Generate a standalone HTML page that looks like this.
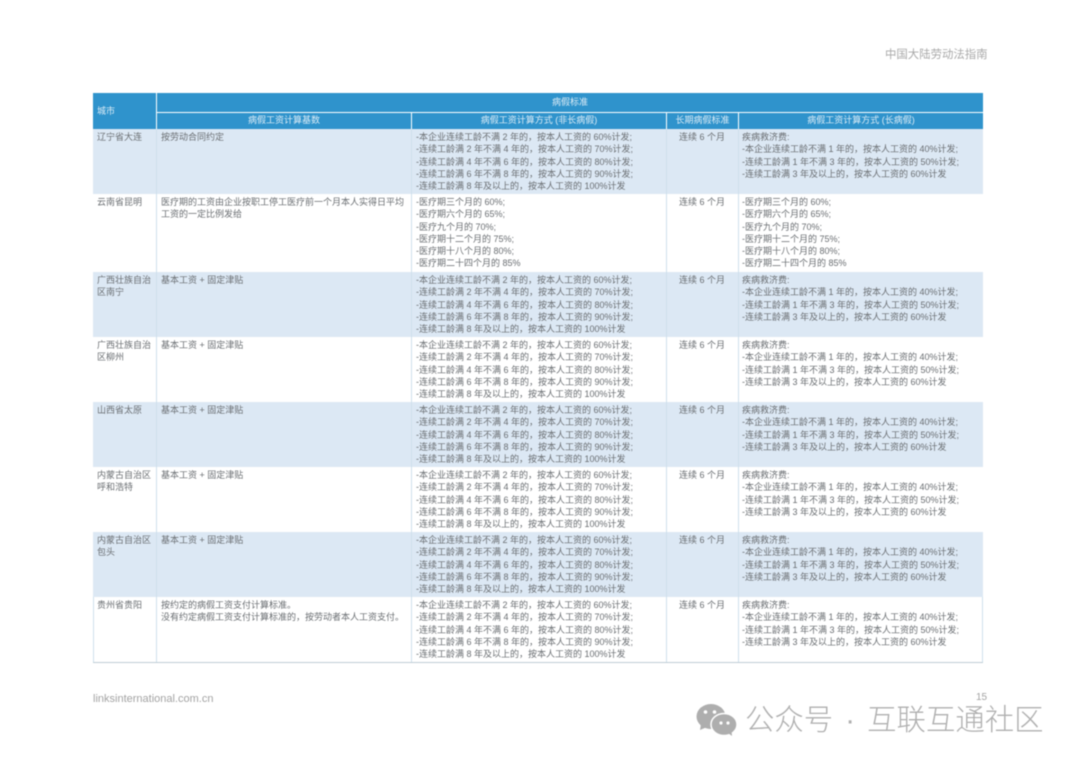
<!DOCTYPE html>
<html lang="zh-CN"><head><meta charset="utf-8"><title>中国大陆劳动法指南</title>
<style>
html,body{margin:0;padding:0;background:#fff}
body{width:1080px;height:764px;position:relative;overflow:hidden;font-family:"Liberation Sans","Noto Sans CJK SC",sans-serif}
.a{position:absolute}
.soft{position:absolute;left:0;top:0;width:1080px;height:764px;filter:blur(.4px)}
.h{position:absolute;background:#2f93cc;color:#dcecf6;font-size:9px;line-height:12px;text-align:center}
.r{position:absolute;left:93px;width:890px}
.r.b{background:#dce8f4}
.r.w{background:#fff}
.c{position:absolute;top:0;bottom:0;font-size:9px;line-height:12.25px;color:#6a6e72;white-space:nowrap;padding-top:2px}
.c1{left:0;width:63px;padding-left:4px;box-sizing:border-box;white-space:normal;word-break:break-all}
.c2{left:63px;width:255px;padding-left:5px;box-sizing:border-box;white-space:normal}
.c3{left:318px;width:255px;padding-left:5px;box-sizing:border-box}
.c4{left:573px;width:72px;text-align:center}
.c5{left:645px;width:245px;padding-left:4px;box-sizing:border-box}
.v{position:absolute;width:1px;background:#cfe0ec}
</style></head><body>
<div class="soft">
<div class="a" style="left:885px;top:48px;font-size:11.4px;line-height:15px;color:#a9a9a9;white-space:nowrap">中国大陆劳动法指南</div>

<div class="h" style="left:93px;top:93px;width:63px;height:36px;text-align:left"><span class="a" style="left:4px;top:12px">城市</span></div>
<div class="h" style="left:157px;top:93px;width:826px;height:19px;line-height:18px">病假标准</div>
<div class="h" style="left:157px;top:113px;width:254px;height:16px;line-height:15px">病假工资计算基数</div>
<div class="h" style="left:412px;top:113px;width:254px;height:16px;line-height:15px">病假工资计算方式 (非长病假)</div>
<div class="h" style="left:667px;top:113px;width:71px;height:16px;line-height:15px">长期病假标准</div>
<div class="h" style="left:739px;top:113px;width:244px;height:16px;line-height:15px">病假工资计算方式 (长病假)</div>

<div class="r b" style="top:129px;height:65px"><div class="c c1">辽宁省大连</div><div class="c c2">按劳动合同约定</div><div class="c c3">-本企业连续工龄不满 2 年的，按本人工资的 60%计发;<br>-连续工龄满 2 年不满 4 年的，按本人工资的 70%计发;<br>-连续工龄满 4 年不满 6 年的，按本人工资的 80%计发;<br>-连续工龄满 6 年不满 8 年的，按本人工资的 90%计发;<br>-连续工龄满 8 年及以上的，按本人工资的 100%计发</div><div class="c c4">连续 6 个月</div><div class="c c5">疾病救济费:<br>-本企业连续工龄不满 1 年的，按本人工资的 40%计发;<br>-连续工龄满 1 年不满 3 年的，按本人工资的 50%计发;<br>-连续工龄满 3 年及以上的，按本人工资的 60%计发</div></div>

<div class="r w" style="top:194px;height:78px"><div class="c c1">云南省昆明</div><div class="c c2">医疗期的工资由企业按职工停工医疗前一个月本人实得日平均工资的一定比例发给</div><div class="c c3">-医疗期三个月的 60%;<br>-医疗期六个月的 65%;<br>-医疗九个月的 70%;<br>-医疗期十二个月的 75%;<br>-医疗期十八个月的 80%;<br>-医疗期二十四个月的 85%</div><div class="c c4">连续 6 个月</div><div class="c c5">-医疗期三个月的 60%;<br>-医疗期六个月的 65%;<br>-医疗九个月的 70%;<br>-医疗期十二个月的 75%;<br>-医疗期十八个月的 80%;<br>-医疗期二十四个月的 85%</div></div>

<div class="r b" style="top:272px;height:65px"><div class="c c1">广西壮族自治区南宁</div><div class="c c2">基本工资 + 固定津贴</div><div class="c c3">-本企业连续工龄不满 2 年的，按本人工资的 60%计发;<br>-连续工龄满 2 年不满 4 年的，按本人工资的 70%计发;<br>-连续工龄满 4 年不满 6 年的，按本人工资的 80%计发;<br>-连续工龄满 6 年不满 8 年的，按本人工资的 90%计发;<br>-连续工龄满 8 年及以上的，按本人工资的 100%计发</div><div class="c c4">连续 6 个月</div><div class="c c5">疾病救济费:<br>-本企业连续工龄不满 1 年的，按本人工资的 40%计发;<br>-连续工龄满 1 年不满 3 年的，按本人工资的 50%计发;<br>-连续工龄满 3 年及以上的，按本人工资的 60%计发</div></div>

<div class="r w" style="top:337px;height:65px"><div class="c c1">广西壮族自治区柳州</div><div class="c c2">基本工资 + 固定津贴</div><div class="c c3">-本企业连续工龄不满 2 年的，按本人工资的 60%计发;<br>-连续工龄满 2 年不满 4 年的，按本人工资的 70%计发;<br>-连续工龄满 4 年不满 6 年的，按本人工资的 80%计发;<br>-连续工龄满 6 年不满 8 年的，按本人工资的 90%计发;<br>-连续工龄满 8 年及以上的，按本人工资的 100%计发</div><div class="c c4">连续 6 个月</div><div class="c c5">疾病救济费:<br>-本企业连续工龄不满 1 年的，按本人工资的 40%计发;<br>-连续工龄满 1 年不满 3 年的，按本人工资的 50%计发;<br>-连续工龄满 3 年及以上的，按本人工资的 60%计发</div></div>

<div class="r b" style="top:402px;height:65px"><div class="c c1">山西省太原</div><div class="c c2">基本工资 + 固定津贴</div><div class="c c3">-本企业连续工龄不满 2 年的，按本人工资的 60%计发;<br>-连续工龄满 2 年不满 4 年的，按本人工资的 70%计发;<br>-连续工龄满 4 年不满 6 年的，按本人工资的 80%计发;<br>-连续工龄满 6 年不满 8 年的，按本人工资的 90%计发;<br>-连续工龄满 8 年及以上的，按本人工资的 100%计发</div><div class="c c4">连续 6 个月</div><div class="c c5">疾病救济费:<br>-本企业连续工龄不满 1 年的，按本人工资的 40%计发;<br>-连续工龄满 1 年不满 3 年的，按本人工资的 50%计发;<br>-连续工龄满 3 年及以上的，按本人工资的 60%计发</div></div>

<div class="r w" style="top:467px;height:65px"><div class="c c1">内蒙古自治区呼和浩特</div><div class="c c2">基本工资 + 固定津贴</div><div class="c c3">-本企业连续工龄不满 2 年的，按本人工资的 60%计发;<br>-连续工龄满 2 年不满 4 年的，按本人工资的 70%计发;<br>-连续工龄满 4 年不满 6 年的，按本人工资的 80%计发;<br>-连续工龄满 6 年不满 8 年的，按本人工资的 90%计发;<br>-连续工龄满 8 年及以上的，按本人工资的 100%计发</div><div class="c c4">连续 6 个月</div><div class="c c5">疾病救济费:<br>-本企业连续工龄不满 1 年的，按本人工资的 40%计发;<br>-连续工龄满 1 年不满 3 年的，按本人工资的 50%计发;<br>-连续工龄满 3 年及以上的，按本人工资的 60%计发</div></div>

<div class="r b" style="top:532px;height:65px"><div class="c c1">内蒙古自治区包头</div><div class="c c2">基本工资 + 固定津贴</div><div class="c c3">-本企业连续工龄不满 2 年的，按本人工资的 60%计发;<br>-连续工龄满 2 年不满 4 年的，按本人工资的 70%计发;<br>-连续工龄满 4 年不满 6 年的，按本人工资的 80%计发;<br>-连续工龄满 6 年不满 8 年的，按本人工资的 90%计发;<br>-连续工龄满 8 年及以上的，按本人工资的 100%计发</div><div class="c c4">连续 6 个月</div><div class="c c5">疾病救济费:<br>-本企业连续工龄不满 1 年的，按本人工资的 40%计发;<br>-连续工龄满 1 年不满 3 年的，按本人工资的 50%计发;<br>-连续工龄满 3 年及以上的，按本人工资的 60%计发</div></div>

<div class="r w" style="top:597px;height:65px"><div class="c c1">贵州省贵阳</div><div class="c c2">按约定的病假工资支付计算标准。<br>没有约定病假工资支付计算标准的，按劳动者本人工资支付。</div><div class="c c3">-本企业连续工龄不满 2 年的，按本人工资的 60%计发;<br>-连续工龄满 2 年不满 4 年的，按本人工资的 70%计发;<br>-连续工龄满 4 年不满 6 年的，按本人工资的 80%计发;<br>-连续工龄满 6 年不满 8 年的，按本人工资的 90%计发;<br>-连续工龄满 8 年及以上的，按本人工资的 100%计发</div><div class="c c4">连续 6 个月</div><div class="c c5">疾病救济费:<br>-本企业连续工龄不满 1 年的，按本人工资的 40%计发;<br>-连续工龄满 1 年不满 3 年的，按本人工资的 50%计发;<br>-连续工龄满 3 年及以上的，按本人工资的 60%计发</div></div>

<div class="v" style="left:156px;top:129px;height:533px"></div>
<div class="v" style="left:411px;top:129px;height:533px"></div>
<div class="v" style="left:666px;top:129px;height:533px"></div>
<div class="v" style="left:738px;top:129px;height:533px"></div>
<div class="v" style="left:93px;top:597px;height:65px"></div>
<div class="v" style="left:982px;top:597px;height:65px"></div>
<div class="a" style="left:93px;top:662px;width:890px;height:1px;background:#bfcdd6"></div>

<div class="a" style="left:93px;top:692px;font-size:11px;line-height:14px;color:#a3a3a3;white-space:nowrap">linksinternational.com.cn</div>
<div class="a" style="left:976px;top:691px;font-size:10px;line-height:13px;color:#a3a3a3">15</div>

<svg class="a" style="left:696px;top:702px" width="42" height="36" viewBox="0 0 42 36">
<ellipse cx="15" cy="14.500" rx="14.500" ry="12.500" fill="#aeaeae"/>
<path fill="#aeaeae" d="M5 22l-1 6 7-3z"/>
<ellipse cx="28" cy="22.500" rx="13" ry="11" fill="#aeaeae" stroke="#fff" stroke-width="1.500"/>
<path fill="#aeaeae" d="M32 31l4 3-.5-5z"/>
<circle cx="9.500" cy="10" r="1.800" fill="#fff"/><circle cx="18.500" cy="10" r="1.800" fill="#fff"/>
<circle cx="25" cy="21" r="1.600" fill="#fff"/><circle cx="32" cy="21" r="1.600" fill="#fff"/>
</svg>
<div class="a" style="left:745px;top:701px;font-size:29.400px;line-height:40px;color:#b0b0b0;white-space:nowrap;font-weight:300">公众号<span style="display:inline-block;width:34px;text-align:center">·</span>互联互通社区</div>
</div>
</body></html>
